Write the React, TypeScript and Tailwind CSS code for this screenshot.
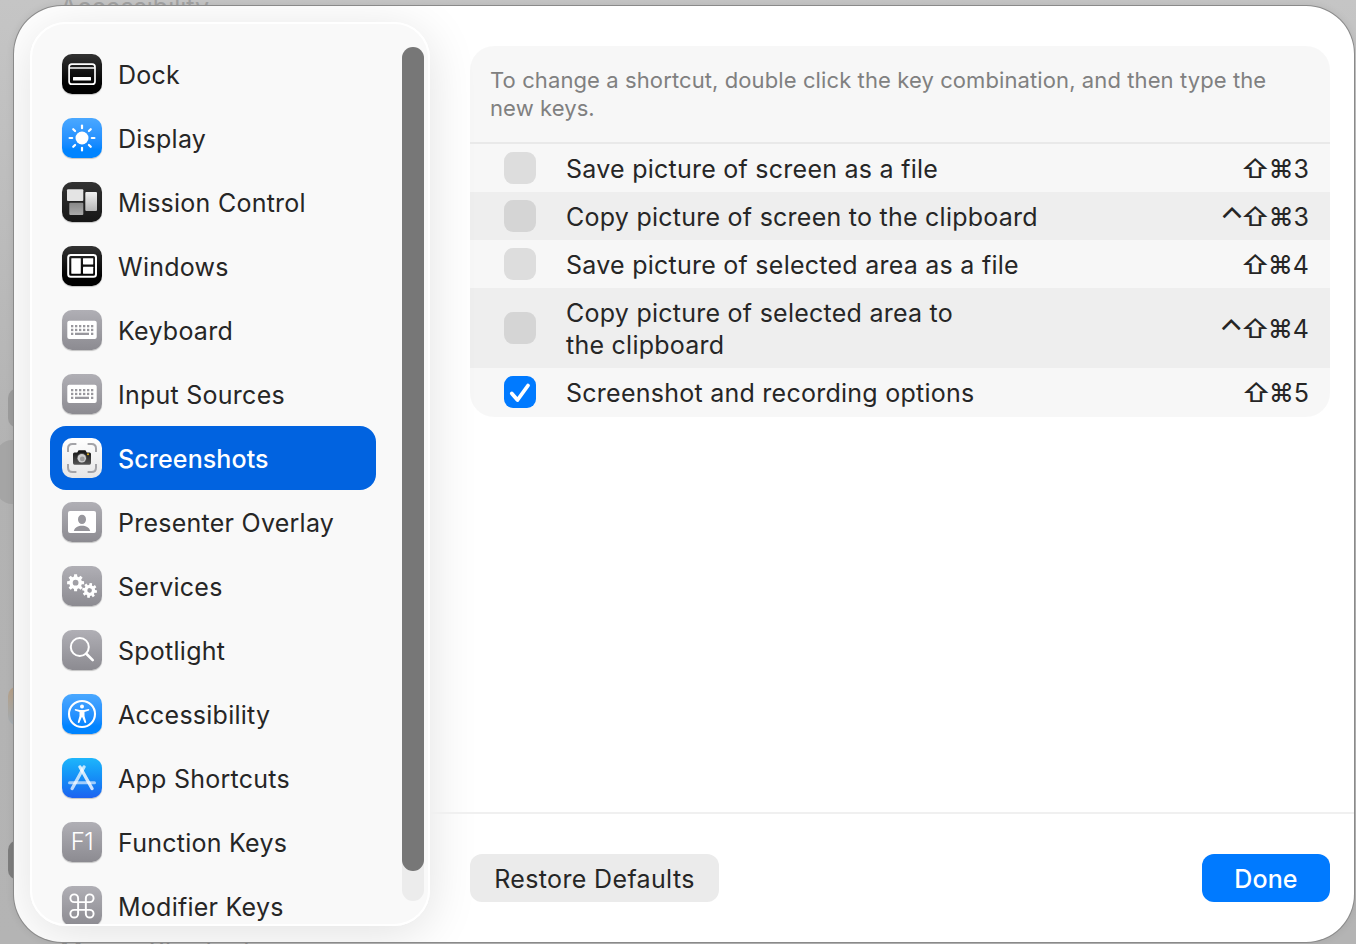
import type { ReactNode } from "react";

const glow = "shadow-[0_1px_1px_rgba(0,0,0,0.22)]";
const tones = {
  black: "bg-gradient-to-b from-[#333] via-[#0a0a0a] via-60% to-black",
  dark: "bg-gradient-to-b from-[#333] to-[#161616]",
  blue: "bg-gradient-to-b from-[#4aa8ff] to-[#0084ff] to-80%",
  gray: "bg-gradient-to-b from-[#b0afb5] to-[#8c8b91]",
  white: "bg-gradient-to-b from-white to-[#e6e6e6]",
  store: "bg-gradient-to-b from-[#1fb6fb] to-[#1d62f0]",
};

function gear(cx: number, cy: number, outer: number, inner: number, hole: number) {
  const pts: string[] = [];
  const n = 8;
  for (let i = 0; i < n; i++) {
    const a = (i * 2 * Math.PI) / n;
    for (const [off, r] of [[-0.26, inner], [-0.17, outer], [0.17, outer], [0.26, inner]]) {
      pts.push(`${(cx + r * Math.cos(a + off)).toFixed(2)} ${(cy + r * Math.sin(a + off)).toFixed(2)}`);
    }
  }
  return `M${pts.join("L")}ZM${cx - hole} ${cy}a${hole} ${hole} 0 1 0 ${hole * 2} 0a${hole} ${hole} 0 1 0 ${-hole * 2} 0Z`;
}

const keyboard = (
  <>
    <rect x="5.3" y="10.7" width="29.4" height="18.3" rx="2" fill="#fff" />
    <g fill="#98979d">
      {[9, 13, 17, 21, 25, 29].map((x) => (
        <g key={x}>
          <rect x={x} y="15" width="2.3" height="2.3" />
          <rect x={x} y="18.8" width="2.3" height="2.3" />
        </g>
      ))}
      <rect x="9" y="22.7" width="2.3" height="2.3" />
      <rect x="13" y="22.7" width="14" height="2.3" />
      <rect x="29" y="22.7" width="2.3" height="2.3" />
    </g>
  </>
);

const art: Record<string, ReactNode> = {
  dock: (
    <g>
      <rect x="7.1" y="10.1" width="25.9" height="20.1" rx="2.8" fill="none" stroke="#fff" strokeWidth="1.7" />
      <path d="M7 14h26" stroke="#fff" strokeWidth="1.3" />
      <rect x="11" y="23" width="18" height="3.6" rx=".6" fill="#fff" />
    </g>
  ),
  display: (
    <g>
      <circle cx="20" cy="20" r="6.5" fill="#fff" />
      {[0, 45, 90, 135, 180, 225, 270, 315].map((a) => (
        <path key={a} d="M20 10.2v-2.6" stroke="#fff" strokeWidth="2.2" strokeLinecap="round" transform={`rotate(${a} 20 20)`} />
      ))}
    </g>
  ),
  mission: (
    <g>
      <defs>
        <linearGradient id="pane" x1="0" y1="0" x2="0" y2="1">
          <stop offset="0" stopColor="#f2f2f2" />
          <stop offset="1" stopColor="#b5b5b5" />
        </linearGradient>
        <linearGradient id="paneLow" x1="0" y1="0" x2="0" y2="1">
          <stop offset="0" stopColor="#888" />
          <stop offset="1" stopColor="#aaa" />
        </linearGradient>
      </defs>
      <rect x="5" y="7.3" width="16.3" height="11.7" rx="1" fill="#e4e4e4" />
      <rect x="23.3" y="10" width="11.7" height="19" rx="1" fill="url(#pane)" />
      <rect x="7.3" y="20.7" width="14" height="12.3" rx="1" fill="url(#paneLow)" />
    </g>
  ),
  windows: (
    <g fill="#fff">
      <rect x="6.2" y="9" width="27.8" height="21.8" rx="2.5" fill="none" stroke="#fff" strokeWidth="2" />
      <rect x="9.3" y="12.2" width="9.5" height="15.5" rx=".4" />
      <rect x="21" y="12.2" width="10.2" height="6.2" rx=".4" />
      <rect x="21" y="20.8" width="10.2" height="6.9" rx=".4" />
    </g>
  ),
  keyboard,
  screenshots: (
    <g>
      <defs>
        <linearGradient id="cam" x1="0" y1="0" x2="0" y2="1">
          <stop offset="0" stopColor="#111" />
          <stop offset="1" stopColor="#555" />
        </linearGradient>
      </defs>
      <path d="M6 14v-3.500q0-4.500 4.500-4.500h3.900M25.600 6H29.500q4.500 0 4.500 4.500v3.500M34 26v3.500q0 4.500-4.500 4.500h-3.900M14.400 34H10.500q-4.500 0-4.500-4.500v-3.500" fill="none" stroke="#a4a4a8" strokeWidth="2" />
      <path d="M12.500 14.500h2.700l1.400-2.200h6.800l1.400 2.200h2.700q1.500 0 1.500 1.500v9q0 1.700-1.500 1.700h-15q-1.500 0-1.500-1.700v-9q0-1.500 1.500-1.500z" fill="url(#cam)" />
      <circle cx="19.800" cy="20.200" r="4.900" fill="#555" />
      <circle cx="19.800" cy="20.200" r="4.200" fill="#cfcfcf" />
      <circle cx="20.300" cy="20.900" r="2.400" fill="#9c9c9c" />
      <circle cx="26" cy="16.200" r="1" fill="#e9b820" />
    </g>
  ),
  presenter: (
    <g>
      <rect x="6" y="9" width="28" height="22" rx="2" fill="#fff" />
      <ellipse cx="20" cy="17.400" rx="4" ry="4.700" fill="#98979d" />
      <path d="M11.800 29c1-3.800 4.300-5.300 8.200-5.300s7.200 1.500 8.200 5.300z" fill="#95949a" />
    </g>
  ),
  services: (
    <g fill="#fff" fillRule="evenodd">
      <path d={gear(13.6, 16.7, 8.6, 6.4, 2.9)} />
      <path d={gear(27.6, 24.4, 7.5, 5.5, 2.3)} transform="rotate(10 27.600 24.400)" />
    </g>
  ),
  spotlight: (
    <g fill="none" stroke="#fff">
      <circle cx="17.800" cy="17" r="9" strokeWidth="2" />
      <path d="M24.300 23.800l6.400 6.300" strokeWidth="2.700" strokeLinecap="round" />
    </g>
  ),
  accessibility: (
    <g>
      <circle cx="20" cy="20" r="13" fill="none" stroke="#fff" strokeWidth="2.100" />
      <circle cx="20" cy="12.500" r="2" fill="#fff" />
      <path d="M13.200 15.100l4.800 1h4l4.800-1q1 .8.200 1.500l-4.500 1.300v4l1.800 6.300q-.6 1.300-1.700.5L20.300 23.200h-.6l-2.300 5.500q-1.100.8-1.700-.5l1.800-6.300v-4L13 16.600q-.8-.7.200-1.500z" fill="#fff" />
    </g>
  ),
  store: (
    <g stroke="#fff" strokeWidth="3.300" strokeLinecap="round">
      <path d="M7.500 24.800h25" strokeWidth="3" opacity=".6" />
      <path d="M22 9L10.200 30.500" opacity=".72" />
      <path d="M18 9L30 30.500" opacity=".8" />
    </g>
  ),
  command: (
    <path
      d="M15 6v12a3 3 0 1 0 3-3H6a3 3 0 1 0 3 3V6a3 3 0 1 0-3 3h12a3 3 0 1 0-3-3"
      transform="translate(4.500 4.500) scale(1.290)"
      fill="none"
      stroke="#fff"
      strokeWidth="1.500"
    />
  ),
};

const items: { label: string; icon: string; tone: keyof typeof tones }[] = [
  { label: "Dock", icon: "dock", tone: "black" },
  { label: "Display", icon: "display", tone: "blue" },
  { label: "Mission Control", icon: "mission", tone: "dark" },
  { label: "Windows", icon: "windows", tone: "black" },
  { label: "Keyboard", icon: "keyboard", tone: "gray" },
  { label: "Input Sources", icon: "keyboard", tone: "gray" },
  { label: "Screenshots", icon: "screenshots", tone: "white" },
  { label: "Presenter Overlay", icon: "presenter", tone: "gray" },
  { label: "Services", icon: "services", tone: "gray" },
  { label: "Spotlight", icon: "spotlight", tone: "gray" },
  { label: "Accessibility", icon: "accessibility", tone: "blue" },
  { label: "App Shortcuts", icon: "store", tone: "store" },
  { label: "Function Keys", icon: "f1", tone: "gray" },
  { label: "Modifier Keys", icon: "command", tone: "gray" },
];

const shortcuts = [
  { label: "Save picture of screen as a file", control: false, digit: "3", on: false },
  { label: "Copy picture of screen to the clipboard", control: true, digit: "3", on: false },
  { label: "Save picture of selected area as a file", control: false, digit: "4", on: false },
  { label: "Copy picture of selected area to the clipboard", control: true, digit: "4", on: false },
  { label: "Screenshot and recording options", control: false, digit: "5", on: true },
];

function Sidebar() {
  return (
    <aside className="relative ml-4 mt-4 flex h-[904px] w-[400px] shrink-0 overflow-hidden rounded-[36px] border-2 border-white bg-[#f9f9f9]">
      <ul className="ml-[18px] mt-[18px] w-[326px]">
        {items.map((it) => {
          const selected = it.label === "Screenshots";
          return (
            <li
              key={it.label}
              className={`flex h-16 items-center gap-4 rounded-2xl pl-3 ${selected ? "bg-[#0163e0] font-medium tracking-[0.1px] text-white" : "text-[#262626]"}`}
            >
              <span className={`flex size-10 items-center justify-center rounded-[10px] ${tones[it.tone]} ${selected ? "" : glow}`}>
                {it.icon === "f1" ? (
                  <span className="text-[24px] font-light leading-none tracking-[-0.5px] text-white">F1</span>
                ) : (
                  <svg viewBox="0 0 40 40" className="size-10">{art[it.icon]}</svg>
                )}
              </span>
              <span className="whitespace-nowrap pt-0.5">{it.label}</span>
            </li>
          );
        })}
      </ul>
      <div className="ml-[26px] mt-[23px] h-[854px] w-[22px] rounded-full bg-[#ececec]">
        <div className="h-[824px] rounded-full bg-[#777]" />
      </div>
    </aside>
  );
}

export default function App() {
  return (
    <div className="relative h-[944px] w-[1356px] overflow-hidden bg-gradient-to-b from-[#c5c5c5] via-[#b2b2b2] to-[#b4b4b4] pl-[14px] pt-[6px] font-['Inter','Liberation_Sans',sans-serif] text-[25px] leading-8 tracking-[0.25px]">
      <div className="absolute left-[60px] top-[-9px] tracking-normal text-[#a2a2a2]">Accessibility</div>
      <div className="absolute left-[60px] top-[934px] text-[#8c8c8c]">Mouse Shortcuts</div>
      <div className="absolute left-2 top-[388px] h-10 w-10 rounded-[10px] bg-[#9c9c9c]" />
      <div className="absolute left-[-4px] top-[440px] h-16 w-10 rounded-2xl bg-[#a5a5a5]" />
      <div className="absolute left-2 top-[686px] h-10 w-10 rounded-[10px] bg-gradient-to-b from-[#b8a085] to-[#a3adb5]" />
      <div className="absolute left-2 top-[840px] h-10 w-10 rounded-[10px] bg-[#7d7d7d]" />

      <div className="relative flex h-[936px] w-[1340px] overflow-hidden rounded-[48px] bg-white shadow-[0_0_0_1px_#8a8a8a,0_0_8px_rgba(0,0,0,0.1)]">
        <div className="absolute left-4 top-4 h-[904px] w-[400px] rounded-[36px] shadow-[0_8px_50px_rgba(0,0,0,0.12)]" />
        <Sidebar />
        <main className="relative flex flex-1 flex-col">
          <div className="h-[806px] pl-10 pt-10">
            <section className="w-[860px] overflow-hidden rounded-[24px] bg-black/[0.032]">
              <p className="h-[98px] border-b-2 border-[#e9e9e9] pl-5 pr-12 pt-5 text-[22px] leading-7 tracking-[0.1px] text-[#808080]">
                To change a shortcut, double click the key combination, and then type the new keys.
              </p>
              {shortcuts.map((s, i) => (
                <div
                  key={s.label}
                  className={`flex items-center pl-[34px] pr-[21px] text-[#262626] ${i % 2 ? "bg-black/[0.034]" : ""} ${i === 3 ? "h-20" : i === 4 ? "h-[49px] pb-px" : "h-12"}`}
                >
                  <span className={`flex size-8 items-center justify-center rounded-[9px] ${s.on ? "bg-[#007aff]" : "bg-black/10"}`}>
                    {s.on && (
                      <svg viewBox="0 0 32 32" className="size-8">
                        <path d="M7.800 17.500l5.700 6.500L24 9.500" fill="none" stroke="#fff" strokeWidth="3.800" strokeLinecap="round" strokeLinejoin="round" />
                      </svg>
                    )}
                  </span>
                  <span className={`ml-[30px] pt-0.5 ${i === 3 ? "w-[420px]" : "whitespace-nowrap"}`}>{s.label}</span>
                  <span className="ml-auto flex h-8 items-center whitespace-nowrap pt-0.5 tracking-normal">
                    {s.control && <span className="-mr-0.5 pt-1.5 text-[32px] leading-8">⌃</span>}
                    <span className="scale-x-110 font-medium">⇧</span>
                    <span className="font-medium">⌘</span>
                    <span>{s.digit}</span>
                  </span>
                </div>
              ))}
            </section>
          </div>
          <footer className="flex flex-1 justify-between border-t-2 border-[#f0f0f0] pl-10 pr-6 pt-10">
            <button className="h-12 w-[249px] rounded-xl bg-[#ebebeb] pt-0.5 tracking-[0.35px] text-[#262626]">Restore Defaults</button>
            <button className="h-12 w-32 rounded-xl bg-[#007aff] pt-0.5 font-medium tracking-[0.1px] text-white">Done</button>
          </footer>
        </main>
      </div>
    </div>
  );
}
